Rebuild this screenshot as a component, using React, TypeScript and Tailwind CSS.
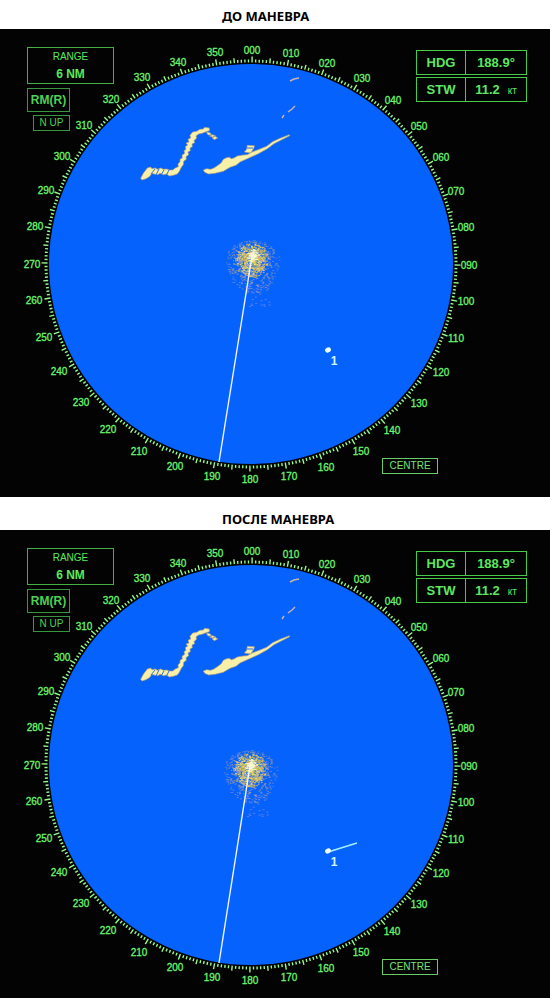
type Point = [number, number];

interface Bearing {
  label: string;
  at: Point;
}

interface RadarPanelProps {
  id: string;
  origin: Point;
  vector?: Point;
}

const CX = 251;
const CY = 235;
const RX = 202;
const RY = 200;

const BEARINGS: Bearing[] = [
  { label: "000", at: [252, 21] },
  { label: "010", at: [291, 24] },
  { label: "020", at: [327, 34] },
  { label: "030", at: [362, 49] },
  { label: "040", at: [393, 71] },
  { label: "050", at: [419, 97] },
  { label: "060", at: [441, 128] },
  { label: "070", at: [456, 162] },
  { label: "080", at: [466, 198] },
  { label: "090", at: [469, 236] },
  { label: "100", at: [466, 272] },
  { label: "110", at: [456, 309] },
  { label: "120", at: [441, 343] },
  { label: "130", at: [419, 374] },
  { label: "140", at: [392, 401] },
  { label: "150", at: [361, 422] },
  { label: "160", at: [326, 438] },
  { label: "170", at: [289, 447] },
  { label: "180", at: [250, 450] },
  { label: "190", at: [212, 447] },
  { label: "200", at: [175, 437] },
  { label: "210", at: [139, 422] },
  { label: "220", at: [108, 400] },
  { label: "230", at: [81, 373] },
  { label: "240", at: [59, 342] },
  { label: "250", at: [44, 308] },
  { label: "260", at: [34, 271] },
  { label: "270", at: [32, 235] },
  { label: "280", at: [35, 197] },
  { label: "290", at: [46, 161] },
  { label: "300", at: [62, 127] },
  { label: "310", at: [84, 96] },
  { label: "320", at: [111, 70] },
  { label: "330", at: [142, 48] },
  { label: "340", at: [178, 33] },
  { label: "350", at: [215, 23] },
];

function tickPath(): string {
  let d = "";
  for (let deg = 0; deg < 360; deg++) {
    const length = deg % 10 === 0 ? 6 : deg % 5 === 0 ? 5 : 3;
    const angle = ((deg + 0.3) * Math.PI) / 180;
    const s = Math.sin(angle);
    const c = Math.cos(angle);
    const inner = 1.5;
    const outer = inner + length;
    d += `M${(CX + (RX + inner) * s).toFixed(2)} ${(CY - (RY + inner) * c).toFixed(2)}`;
    d += `L${(CX + (RX + outer) * s).toFixed(2)} ${(CY - (RY + outer) * c).toFixed(2)}`;
  }
  return d;
}

const TICKS = tickPath();

interface Speck {
  x: number;
  y: number;
  w: number;
  color: string;
  opacity: number;
}

// Sea clutter: deterministic specks, dense and yellow near own ship, sparse and pinkish further out.
function makeClutter(): Speck[] {
  let seed = 20117;
  const random = () => {
    seed = (seed * 16807) % 2147483647;
    return seed / 2147483647;
  };
  const specks: Speck[] = [];
  const outer = ["#c9a9a8", "#d8ad74", "#a99bdc", "#e2bd58", "#b99fc4"];
  for (let i = 0; i < 620; i++) {
    const angle = random() * Math.PI * 2;
    const r = 5 + random() * 22;
    const down = Math.sin(angle) > 0 ? 1.25 : 0.75;
    specks.push({
      x: Math.cos(angle) * r,
      y: 4 + Math.sin(angle) * r * down,
      w: 1 + random() * 1.2,
      color: outer[Math.floor(random() * outer.length)],
      opacity: Math.max(0.35, 1.1 - r / 36),
    });
  }
  for (let i = 0; i < 34; i++) {
    specks.push({
      x: -8 + random() * 26,
      y: 28 + random() * 26,
      w: 2,
      color: "#9a8fe0",
      opacity: 0.6,
    });
  }
  const inner = ["#e6d45a", "#f4e98a", "#c9b94e", "#d9c53a"];
  for (let i = 0; i < 440; i++) {
    const angle = random() * Math.PI * 2;
    const r = Math.pow(random(), 0.75) * 16;
    specks.push({
      x: Math.cos(angle) * r,
      y: 4 + Math.sin(angle) * r * 1.1,
      w: 1 + random(),
      color: inner[Math.floor(random() * inner.length)],
      opacity: 0.85,
    });
  }
  for (let i = 0; i < 70; i++) {
    const angle = random() * Math.PI * 2;
    const r = random() * 6;
    specks.push({
      x: Math.cos(angle) * r,
      y: -1 + Math.sin(angle) * r,
      w: 2,
      color: "#fffbd0",
      opacity: 0.9,
    });
  }
  return specks;
}

const CLUTTER = makeClutter();

function Echoes() {
  return (
    <g>
      <g
        transform="translate(130 81) scale(0.3333)"
        fill="#f8f0a8"
        stroke="#a89c80"
        strokeWidth="2"
        strokeLinejoin="round"
      >
        <path d="M32 205 40 190 52 174 62 171 66 176 76 174 82 178 92 174 100 178 110 177 118 180 128 180 136 174 145 170 144 162 150 155 150 148 157 144 156 136 164 130 162 122 168 118 166 110 173 105 168 99 177 96 174 88 182 84 180 76 188 66 200 64 210 58 220 57 224 52 238 54 238 62 226 66 216 70 206 72 198 78 200 84 192 92 194 98 186 102 187 110 180 114 181 122 174 126 176 134 168 140 169 148 161 154 160 164 154 172 148 184 142 192 130 196 118 198 110 192 100 194 90 190 84 194 72 192 66 190 58 200 48 206 36 210Z" />
        <path d="M229 66 240 68 245 74 234 75ZM238 78 248 74 257 78 247 81ZM246 83 256 79 263 84 253 89Z" />
        <path d="M220 180 230 176 242 178 252 174 264 166 274 158 280 148 290 143 298 142 304 146 312 144 322 138 340 135 352 134 366 126 390 117 410 109 428 95 450 85 478 74 479 77 452 91 432 101 412 116 385 131 350 147 330 156 318 166 300 172 280 184 255 190 236 192 224 187Z" />
        <path d="M343 126 350 118 352 106 373 107 372 113 368 120 362 129Z" />
      </g>
      <g stroke="#2f6fe8" strokeWidth="1" fill="none">
        <path d="M151 145 155 140M156 146 159 140M161 146 164 141M167 145 169 141" />
        <path d="M247 119 253 119" />
      </g>
      <g stroke="#c8b4b0" strokeWidth="1.4" fill="none">
        <path d="M290 52 294 50 299 49M288 83 292 80 295 77M282 89 284 86" />
      </g>
    </g>
  );
}

function Scope({ id, origin, vector }: RadarPanelProps) {
  const [ox, oy] = origin;
  return (
    <svg
      viewBox="0 0 550 468"
      className="col-start-1 row-start-1 block w-full"
      role="img"
      aria-labelledby={id}
    >
      <ellipse cx={CX} cy={CY} rx={RX} ry={RY} fill="#0562fd" />
      <path d={TICKS} stroke="#98fa8c" strokeWidth="1.4" fill="none" />
      <g
        fill="#6cf56c"
        stroke="#6cf56c"
        strokeWidth="0.3"
        textAnchor="middle"
        className="font-['Liberation_Sans',Arial,sans-serif] text-[10px]"
      >
        {BEARINGS.map((b) => (
          <text key={b.label} x={b.at[0]} y={b.at[1] + 4}>
            {b.label}
          </text>
        ))}
      </g>
      <Echoes />
      <g transform={`translate(${ox} ${oy})`}>
        {CLUTTER.map((s, i) => (
          <rect
            key={i}
            x={s.x.toFixed(1)}
            y={s.y.toFixed(1)}
            width={s.w.toFixed(1)}
            height="1"
            fill={s.color}
            opacity={s.opacity.toFixed(2)}
          />
        ))}
      </g>
      <line x1={ox} y1={oy} x2="219" y2="433" stroke="#f0f4ff" strokeWidth="1.4" />
      {vector && (
        <line x1="328" y1="322" x2={vector[0]} y2={vector[1]} stroke="#a5f0ff" strokeWidth="1.4" />
      )}
      <ellipse cx="328" cy="321" rx="3" ry="2.4" fill="#f0fff4" transform="rotate(-25 328 321)" />
      <text
        x="334"
        y="336"
        textAnchor="middle"
        fill="#d0faff"
        className="font-['Liberation_Sans',Arial,sans-serif] text-[12px] font-bold"
      >
        1
      </text>
    </svg>
  );
}

function Readout({ name, value, unit }: { name: string; value: string; unit?: string }) {
  return (
    <div className="flex h-[25px] border border-[#46cc46] text-[13px] leading-[23px] font-bold text-[#5fe65f]">
      <dt className="w-[49px] border-r border-[#46cc46] text-center">{name}</dt>
      <dd className="flex flex-1 items-baseline justify-center gap-2">
        {value}
        {unit && <span className="text-[10px] font-normal">{unit}</span>}
      </dd>
    </div>
  );
}

function RadarPanel(props: RadarPanelProps) {
  return (
    <div className="grid bg-[#020302] font-['Liberation_Sans',Arial,sans-serif]">
      <Scope {...props} />
      <div className="z-10 col-start-1 row-start-1 flex flex-col justify-between">
        <div className="flex items-start justify-between pt-[18px] pr-[23px] pl-[27px]">
          <div className="flex flex-col gap-1">
            <div className="flex h-[37px] w-[87px] flex-col items-center border border-[#44b044] text-[#5ce85c]">
              <span className="text-[10px] leading-[17px]">RANGE</span>
              <strong className="text-[12px] leading-[18px]">6 NM</strong>
            </div>
            <div className="flex w-[43px] flex-col items-end gap-[3px]">
              <button
                type="button"
                className="h-[24px] w-full border border-[#38963e] text-[12px] leading-[22px] font-bold text-[#4ed054]"
              >
                RM(R)
              </button>
              <button
                type="button"
                className="h-[16px] w-[37px] border border-[#38963e] text-[10px] leading-[14px] whitespace-nowrap text-[#4ed054]"
              >
                N UP
              </button>
            </div>
          </div>
          <dl className="mt-[3px] flex w-[111px] flex-col gap-[2px]">
            <Readout name="HDG" value="188.9°" />
            <Readout name="STW" value="11.2" unit="кт" />
          </dl>
        </div>
        <div className="flex justify-end pr-[112px] pb-[23px]">
          <button
            type="button"
            className="h-[16px] w-[56px] border border-[#66cc66] text-[10px] leading-[14px] text-[#74e474]"
          >
            CENTRE
          </button>
        </div>
      </div>
    </div>
  );
}

export default function App() {
  return (
    <main className="bg-white">
      <section>
        <h2
          id="before"
          className="pt-2 pb-1 pl-[222px] font-['Noto_Sans','DejaVu_Sans',sans-serif] text-[13px] leading-[17px] font-bold text-black"
        >
          ДО МАНЕВРА
        </h2>
        <RadarPanel id="before" origin={[252, 227]} />
      </section>
      <section>
        <h2
          id="after"
          className="pt-[14px] pb-[2px] pl-[222px] font-['Noto_Sans','DejaVu_Sans',sans-serif] text-[13px] leading-[17px] font-bold text-black"
        >
          ПОСЛЕ МАНЕВРА
        </h2>
        <RadarPanel id="after" origin={[250, 236]} vector={[357, 313]} />
      </section>
    </main>
  );
}
